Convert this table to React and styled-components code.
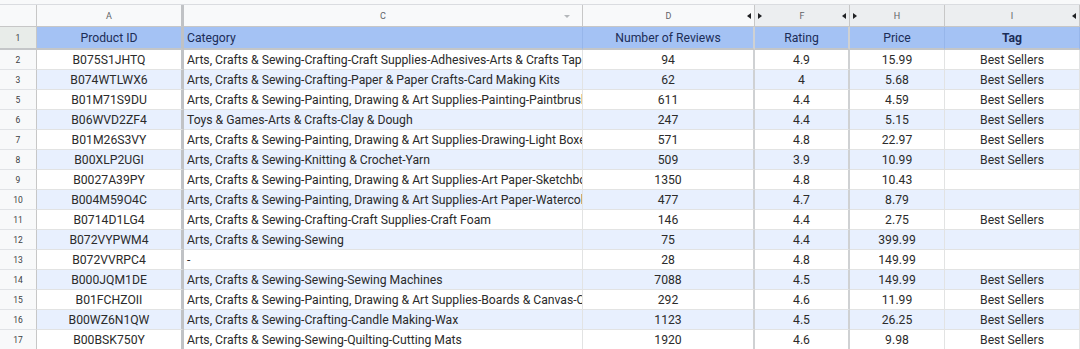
import React from 'react';
import styled, { createGlobalStyle, css } from 'styled-components';

const GlobalStyle = createGlobalStyle`
  html, body {
    margin: 0;
    padding: 0;
    background: #ffffff;
    font-family: Roboto, "Liberation Sans", Arial, sans-serif;
  }
`;

const columns = [
  { key: 'id', letter: 'A', align: 'center', label: 'Product ID' },
  { key: 'cat', letter: 'C', align: 'left', label: 'Category' },
  { key: 'rev', letter: 'D', align: 'center', label: 'Number of Reviews' },
  { key: 'rating', letter: 'F', align: 'center', label: 'Rating' },
  { key: 'price', letter: 'H', align: 'center', label: 'Price' },
  { key: 'tag', letter: 'I', align: 'center', label: 'Tag', bold: true },
];

const rows = [
  [2, 'B075S1JHTQ', 'Arts, Crafts & Sewing-Crafting-Craft Supplies-Adhesives-Arts & Crafts Tape', '94', '4.9', '15.99', 'Best Sellers'],
  [3, 'B074WTLWX6', 'Arts, Crafts & Sewing-Crafting-Paper & Paper Crafts-Card Making Kits', '62', '4', '5.68', 'Best Sellers'],
  [5, 'B01M71S9DU', 'Arts, Crafts & Sewing-Painting, Drawing & Art Supplies-Painting-Paintbrushes', '611', '4.4', '4.59', 'Best Sellers'],
  [6, 'B06WVD2ZF4', 'Toys & Games-Arts & Crafts-Clay & Dough', '247', '4.4', '5.15', 'Best Sellers'],
  [7, 'B01M26S3VY', 'Arts, Crafts & Sewing-Painting, Drawing & Art Supplies-Drawing-Light Boxes', '571', '4.8', '22.97', 'Best Sellers'],
  [8, 'B00XLP2UGI', 'Arts, Crafts & Sewing-Knitting & Crochet-Yarn', '509', '3.9', '10.99', 'Best Sellers'],
  [9, 'B0027A39PY', 'Arts, Crafts & Sewing-Painting, Drawing & Art Supplies-Art Paper-Sketchbooks', '1350', '4.8', '10.43', ''],
  [10, 'B004M59O4C', 'Arts, Crafts & Sewing-Painting, Drawing & Art Supplies-Art Paper-Watercolor', '477', '4.7', '8.79', ''],
  [11, 'B0714D1LG4', 'Arts, Crafts & Sewing-Crafting-Craft Supplies-Craft Foam', '146', '4.4', '2.75', 'Best Sellers'],
  [12, 'B072VYPWM4', 'Arts, Crafts & Sewing-Sewing', '75', '4.4', '399.99', ''],
  [13, 'B072VVRPC4', '-', '28', '4.8', '149.99', ''],
  [14, 'B000JQM1DE', 'Arts, Crafts & Sewing-Sewing-Sewing Machines', '7088', '4.5', '149.99', 'Best Sellers'],
  [15, 'B01FCHZOII', 'Arts, Crafts & Sewing-Painting, Drawing & Art Supplies-Boards & Canvas-Canvas', '292', '4.6', '11.99', 'Best Sellers'],
  [16, 'B00WZ6N1QW', 'Arts, Crafts & Sewing-Crafting-Candle Making-Wax', '1123', '4.5', '26.25', 'Best Sellers'],
  [17, 'B00BSK750Y', 'Arts, Crafts & Sewing-Sewing-Quilting-Cutting Mats', '1920', '4.6', '9.98', 'Best Sellers'],
];

const Page = styled.div`
  width: 1080px;
  height: 349px;
  overflow: hidden;
  background: #fff;
`;

const TopStrip = styled.div`
  height: 4px;
  background: #f8f9fa;
  border-bottom: 1px solid #dadce0;
`;

const Grid = styled.div`
  display: grid;
  grid-template-columns: 37px 147px 399px 172px 95px 95px 1fr;
`;

const Corner = styled.div`
  height: 22px;
  background: #f8f9fa;
  border-right: 1px solid #c7c7c7;
  border-bottom: 1px solid #c7c7c7;
  box-sizing: border-box;
`;

const ColHead = styled.div`
  position: relative;
  height: 22px;
  box-sizing: border-box;
  background: ${p => (p.$shaded ? '#eceef0' : '#f8f9fa')};
  border-right: 1px solid #c7c7c7;
  border-bottom: 1px solid #c7c7c7;
  display: flex;
  align-items: center;
  justify-content: center;
  font-size: 9px;
  color: #5f6368;
  ${p => p.$frozen && css`border-right: 3px solid #c0c2c5;`}
`;

const Arrow = styled.span`
  position: absolute;
  top: 8px;
  width: 0;
  height: 0;
  border-top: 3px solid transparent;
  border-bottom: 3px solid transparent;
  ${p => (p.$dir === 'left'
    ? css`right: 3px; border-right: 4px solid #202124;`
    : css`left: 3px; border-left: 4px solid #202124;`)}
`;

const Filter = styled.span`
  position: absolute;
  top: 10px;
  right: 12px;
  width: 0;
  height: 0;
  border-left: 3px solid transparent;
  border-right: 3px solid transparent;
  border-top: 3px solid #b4b7ba;
`;

const RowNum = styled.div`
  height: ${p => (p.$head ? '23px' : '20px')};
  box-sizing: border-box;
  background: ${p => (p.$head ? '#e8ece9' : '#f8f9fa')};
  border-right: 1px solid #c7c7c7;
  border-bottom: ${p => (p.$head ? '2px solid #c4c6c8' : '1px solid #e1e3e6')};
  display: flex;
  align-items: center;
  justify-content: center;
  font-size: 8.5px;
  color: #3c4043;
`;

const Cell = styled.div`
  height: ${p => (p.$head ? '23px' : '20px')};
  box-sizing: border-box;
  padding: 0 3px;
  background: ${p => (p.$head ? '#a4c2f4' : p.$alt ? '#e8f0fe' : '#ffffff')};
  border-right: 1px solid ${p => (p.$head ? '#97b6ea' : '#e2e3e3')};
  border-bottom: ${p => (p.$head ? '2px solid #c4c6c8' : '1px solid #e2e3e3')};
  display: flex;
  align-items: center;
  justify-content: ${p => (p.$align === 'left' ? 'flex-start' : 'center')};
  white-space: nowrap;
  overflow: hidden;
  font-size: 12.2px;
  color: ${p => (p.$head ? '#1c2d57' : '#2b2b2b')};
  font-weight: ${p => (p.$bold ? 700 : 400)};
  ${p => p.$frozen && css`border-right: 3px solid #c0c2c5;`}
  ${p => p.$hiddenAfter && css`border-right: 2px double #cfd1d3;`}
`;

export default function App() {
  return (
    <Page>
      <GlobalStyle />
      <TopStrip />
      <Grid>
        <Corner />
        <ColHead $frozen>A</ColHead>
        <ColHead>
          C
          <Filter />
        </ColHead>
        <ColHead>
          D
          <Arrow $dir="left" />
        </ColHead>
        <ColHead $shaded>
          F
          <Arrow $dir="right" />
          <Arrow $dir="left" />
        </ColHead>
        <ColHead $shaded>
          H
          <Arrow $dir="right" />
        </ColHead>
        <ColHead $shaded>
          I
          <Arrow $dir="left" />
        </ColHead>

        <RowNum $head>1</RowNum>
        {columns.map(c => (
          <Cell
            key={c.key}
            $head
            $align={c.align}
            $bold={c.bold}
            $frozen={c.key === 'id'}
            $hiddenAfter={c.key === 'rev' || c.key === 'rating'}
          >
            {c.label}
          </Cell>
        ))}

        {rows.map((r, i) => (
          <React.Fragment key={r[0]}>
            <RowNum>{r[0]}</RowNum>
            {columns.map((c, j) => (
              <Cell
                key={c.key}
                $alt={i % 2 === 1}
                $align={c.align}
                $frozen={c.key === 'id'}
                $hiddenAfter={c.key === 'rev' || c.key === 'rating'}
              >
                {r[j + 1]}
              </Cell>
            ))}
          </React.Fragment>
        ))}
      </Grid>
    </Page>
  );
}
